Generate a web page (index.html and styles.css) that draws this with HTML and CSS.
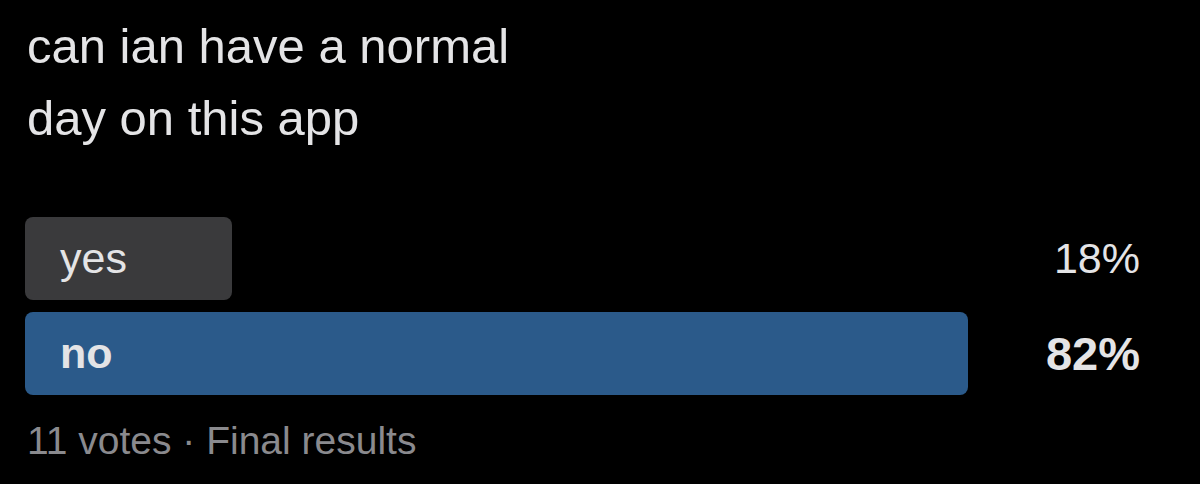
FILE: index.html
```html
<!DOCTYPE html>
<html lang="en">
<head>
    <meta charset="UTF-8">
    <meta name="viewport" content="width=device-width, initial-scale=1.0">
    <title>Poll</title>
    <link rel="stylesheet" href="styles.css">
</head>
<body>
    <div class="poll">
        <!-- Pregunta -->
        <p class="question">can ian have a normal<br>day on this app</p>

        <!-- Opciones -->
        <div class="options">
            <div class="option">
                <div class="bar" style="width: 18%;"><span class="label">yes</span></div>
                <span class="percent">18%</span>
            </div>
            <div class="option winner">
                <div class="bar" style="width: 82%;"><span class="label">no</span></div>
                <span class="percent">82%</span>
            </div>
        </div>

        <p class="meta">11 votes · Final results</p>
    </div>
</body>
</html>
```

FILE: styles.css
```css
body {
    margin: 0;
    background-color: #000;
    font-family: "Liberation Sans", Arial, sans-serif;
    color: #e4e4e6;
}

.poll {
    padding: 10px 25px 0 25px;
    width: 1150px;
}

.question {
    margin: 0;
    font-size: 49px;
    line-height: 72px;
    padding-left: 2px;
}

.options {
    display: flex;
    flex-direction: column;
    gap: 12px;
    margin-top: 63px;
}

/* Barra y porcentaje en la misma celda */
.option {
    display: grid;
    height: 83px;
}

.bar, .percent {
    grid-area: 1 / 1;
}

.bar {
    display: flex;
    align-items: center;
    background-color: #3a3a3c;
    border-radius: 8px;
    box-sizing: border-box;
    padding-left: 35px;
}

.label {
    font-size: 43px;
}

.percent {
    justify-self: end;
    align-self: center;
    padding-right: 35px;
    font-size: 43px;
}

.winner .bar {
    background-color: #2b5a8a;
}

.winner .label {
    font-weight: bold;
}

.winner .percent {
    font-weight: bold;
    font-size: 47px;
}

.meta {
    margin: 24px 0 0 2px;
    font-size: 39px;
    color: #8a8a8e;
}
```
